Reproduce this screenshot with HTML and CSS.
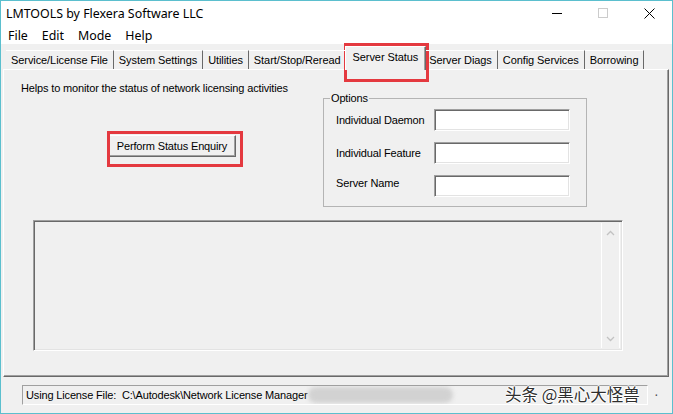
FILE: index.html
```html
<!DOCTYPE html>
<html lang="en">
<head>
    <meta charset="UTF-8">
    <title>LMTOOLS by Flexera Software LLC</title>
    <link rel="stylesheet" href="styles.css">
</head>
<body>
    <div class="window">
        <div class="titlebar">
            <span class="title">LMTOOLS by Flexera Software LLC</span>
            <div class="controls">
                <span class="ctl">
                    <svg width="10" height="10" viewBox="0 0 10 10"><path d="M0 5.5H10" stroke="#000" stroke-width="1"/></svg>
                </span>
                <span class="ctl">
                    <svg width="10" height="10" viewBox="0 0 10 10"><rect x="0.5" y="0.5" width="9" height="9" fill="none" stroke="#cccccc" stroke-width="1"/></svg>
                </span>
                <span class="ctl">
                    <svg width="11" height="11" viewBox="0 0 11 11"><path d="M0.5 0.5L10.5 10.5M10.5 0.5L0.5 10.5" stroke="#000" stroke-width="1"/></svg>
                </span>
            </div>
        </div>
        <div class="menubar">
            <span>File</span>
            <span>Edit</span>
            <span>Mode</span>
            <span>Help</span>
        </div>
        <div class="client">
            <div class="tabs">
                <span class="tab">Service/License File</span>
                <span class="tab">System Settings</span>
                <span class="tab">Utilities</span>
                <span class="tab">Start/Stop/Reread</span>
                <span class="tab active">Server Status</span>
                <span class="tab">Server Diags</span>
                <span class="tab">Config Services</span>
                <span class="tab">Borrowing</span>
            </div>
            <div class="panel">
                <div class="panel-top">
                    <div class="intro">
                        <p class="desc">Helps to monitor the status of network licensing activities</p>
                        <button class="btn">Perform Status Enquiry</button>
                    </div>
                    <fieldset class="options">
                        <legend>Options</legend>
                        <div class="option-grid">
                            <label for="daemon">Individual Daemon</label>
                            <input type="text" id="daemon">
                            <label for="feature">Individual Feature</label>
                            <input type="text" id="feature">
                            <label for="server" class="lift">Server Name</label>
                            <input type="text" id="server">
                        </div>
                    </fieldset>
                </div>
                <div class="listbox">
                    <div class="list-body"></div>
                    <div class="scrollbar">
                        <svg width="9" height="6" viewBox="0 0 9 6"><path d="M1 5L4.5 1.5L8 5" fill="none" stroke="#c2c2c2" stroke-width="1.3"/></svg>
                        <svg width="9" height="6" viewBox="0 0 9 6"><path d="M1 1L4.5 4.5L8 1" fill="none" stroke="#c2c2c2" stroke-width="1.3"/></svg>
                    </div>
                </div>
            </div>
            <div class="statusbar">
                <div class="status-field">
                    <span>Using License File:&nbsp; C:\Autodesk\Network License Manager</span>
                    <span class="blur"></span>
                </div>
            </div>
        </div>

        <!-- red annotation boxes and watermark lie over the screenshot -->
        <div class="mark mark-tab"></div>
        <div class="mark mark-btn"></div>
        <div class="watermark">头条 @黑心大怪兽</div>
        <div class="dot">·</div>
    </div>
</body>
</html>
```

FILE: styles.css
```css
body {
    margin: 0;
    padding: 0;
    background-color: #fff;
}
.window {
    width: 673px;
    height: 414px;
    box-sizing: border-box;
    border: 1px solid #5bbfce;
    display: flex;
    flex-direction: column;
    position: relative;
    overflow: hidden;
    font-family: "Liberation Sans", Arial, sans-serif;
    color: #000;
}
.titlebar {
    height: 25px;
    display: flex;
    justify-content: space-between;
    align-items: center;
    background-color: #fff;
}
.title {
    font-family: "Noto Sans", sans-serif;
    font-size: 12.4px;
    padding-left: 5px;
    padding-bottom: 1px;
}
.controls {
    display: flex;
    height: 100%;
}
.ctl {
    width: 46px;
    display: flex;
    justify-content: center;
    align-items: center;
    padding-bottom: 1px;
}
.menubar {
    height: 18px;
    display: flex;
    align-items: center;
    background-color: #fff;
    font-family: "Noto Sans", sans-serif;
    font-size: 12.4px;
}
.menubar span {
    padding: 0 7px;
}
.client {
    flex: 1;
    background-color: #f0f0f0;
}
.tabs {
    display: flex;
    align-items: flex-end;
    height: 24px;
    margin: 2px 0 0 5px;
    position: relative;
    z-index: 1;
}
.tab {
    height: 19px;
    line-height: 18px;
    margin-bottom: 1px;
    padding: 0 5px;
    box-sizing: border-box;
    border-top: 1px solid #fff;
    border-right: 1px solid #696969;
    font-size: 11px;
    letter-spacing: -0.08px;
    white-space: nowrap;
}
.tab.active {
    height: 24px;
    line-height: 20px;
    margin: 0 -2px 0 -2px;
    padding: 0 7px;
    border-left: 1px solid #fff;
    box-shadow: inset -1px 0 0 #a0a0a0;
    background-color: #f0f0f0;
    position: relative;
    z-index: 2;
}
.panel {
    height: 308px;
    margin: -1px 3px 0 2px;
    box-sizing: border-box;
    border: 1px solid;
    border-color: #fff #696969 #696969 #fff;
    box-shadow: inset -1px -1px 0 #a0a0a0;
}
.panel-top {
    display: flex;
}
.intro {
    width: 319px;
    padding: 12px 0 0 17px;
    box-sizing: border-box;
}
.desc {
    margin: 0;
    font-size: 11px;
    letter-spacing: -0.15px;
    line-height: 13px;
    white-space: nowrap;
}
.btn {
    display: block;
    width: 128px;
    height: 22px;
    margin: 40px 0 0 87px;
    padding: 0;
    font-family: "Liberation Sans", Arial, sans-serif;
    font-size: 11px;
    letter-spacing: -0.15px;
    color: #000;
    background-color: #f0f0f0;
    border: 1px solid;
    border-color: #fff #696969 #696969 #fff;
    box-shadow: inset -1px -1px 0 #a0a0a0;
}
.options {
    width: 264px;
    height: 115px;
    margin: 22px 0 0 0;
    padding: 4px 16px 10px 12px;
    box-sizing: border-box;
    border: 1px solid #b4b4b4;
}
.options legend {
    margin-left: -6px;
    padding: 0 1px;
    font-size: 11px;
    letter-spacing: -0.15px;
    line-height: 13px;
}
.option-grid {
    display: grid;
    grid-template-columns: 98px 136px;
    grid-template-rows: 22px 22px 22px;
    row-gap: 11px;
    align-items: center;
}
.option-grid label {
    font-size: 11px;
    letter-spacing: -0.15px;
    white-space: nowrap;
}
.option-grid .lift {
    padding-bottom: 6px;
}
.option-grid input {
    width: 136px;
    height: 22px;
    margin: 0;
    box-sizing: border-box;
    background-color: #fff;
    border: 1px solid;
    border-color: #a0a0a0 #fff #fff #a0a0a0;
    box-shadow: inset 1px 1px 0 #696969, inset -1px -1px 0 #e3e3e3;
    outline: none;
}
.listbox {
    width: 590px;
    height: 131px;
    margin: 13px 0 0 29px;
    box-sizing: border-box;
    display: flex;
    border: 1px solid;
    border-color: #a0a0a0 #fff #fff #a0a0a0;
    box-shadow: inset 1px 1px 0 #696969, inset -1px -1px 0 #e3e3e3;
}
.list-body {
    flex: 1;
}
.scrollbar {
    width: 17px;
    margin: 2px 2px 2px 0;
    border-left: 1px solid #fff;
    border-right: 1px solid #fff;
    display: flex;
    flex-direction: column;
    justify-content: space-between;
    align-items: center;
    padding: 7px 0 6px;
}
.statusbar {
    padding: 8px 0 0 21px;
}
.status-field {
    width: 626px;
    height: 20px;
    box-sizing: border-box;
    display: flex;
    align-items: center;
    padding-left: 3px;
    border: 1px solid;
    border-color: #a0a0a0 #fff #fff #a0a0a0;
    font-size: 11px;
    letter-spacing: -0.15px;
    white-space: nowrap;
    overflow: hidden;
}
.blur {
    display: inline-block;
    width: 145px;
    height: 16px;
    margin-left: 1px;
    background-color: #d2d2d2;
    border-radius: 8px;
    filter: blur(2px);
}
.mark {
    position: absolute;
    border: 3px solid #e4393f;
    box-sizing: border-box;
}
.mark-tab {
    left: 343px;
    top: 42px;
    width: 85px;
    height: 39px;
}
.mark-btn {
    left: 106px;
    top: 130px;
    width: 136px;
    height: 36px;
}
.watermark {
    position: absolute;
    left: 504px;
    top: 382px;
    font-family: "Noto Sans CJK SC", sans-serif;
    font-size: 16.5px;
    line-height: 22px;
    color: #2e2e2e;
    text-shadow: 0 0 1px #fff, 1px 0 0 #fff, -1px 0 0 #fff, 0 1px 0 #fff, 0 -1px 0 #fff;
}
.dot {
    position: absolute;
    left: 653px;
    top: 383px;
    font-size: 14px;
    line-height: 20px;
    color: #555;
}
```
